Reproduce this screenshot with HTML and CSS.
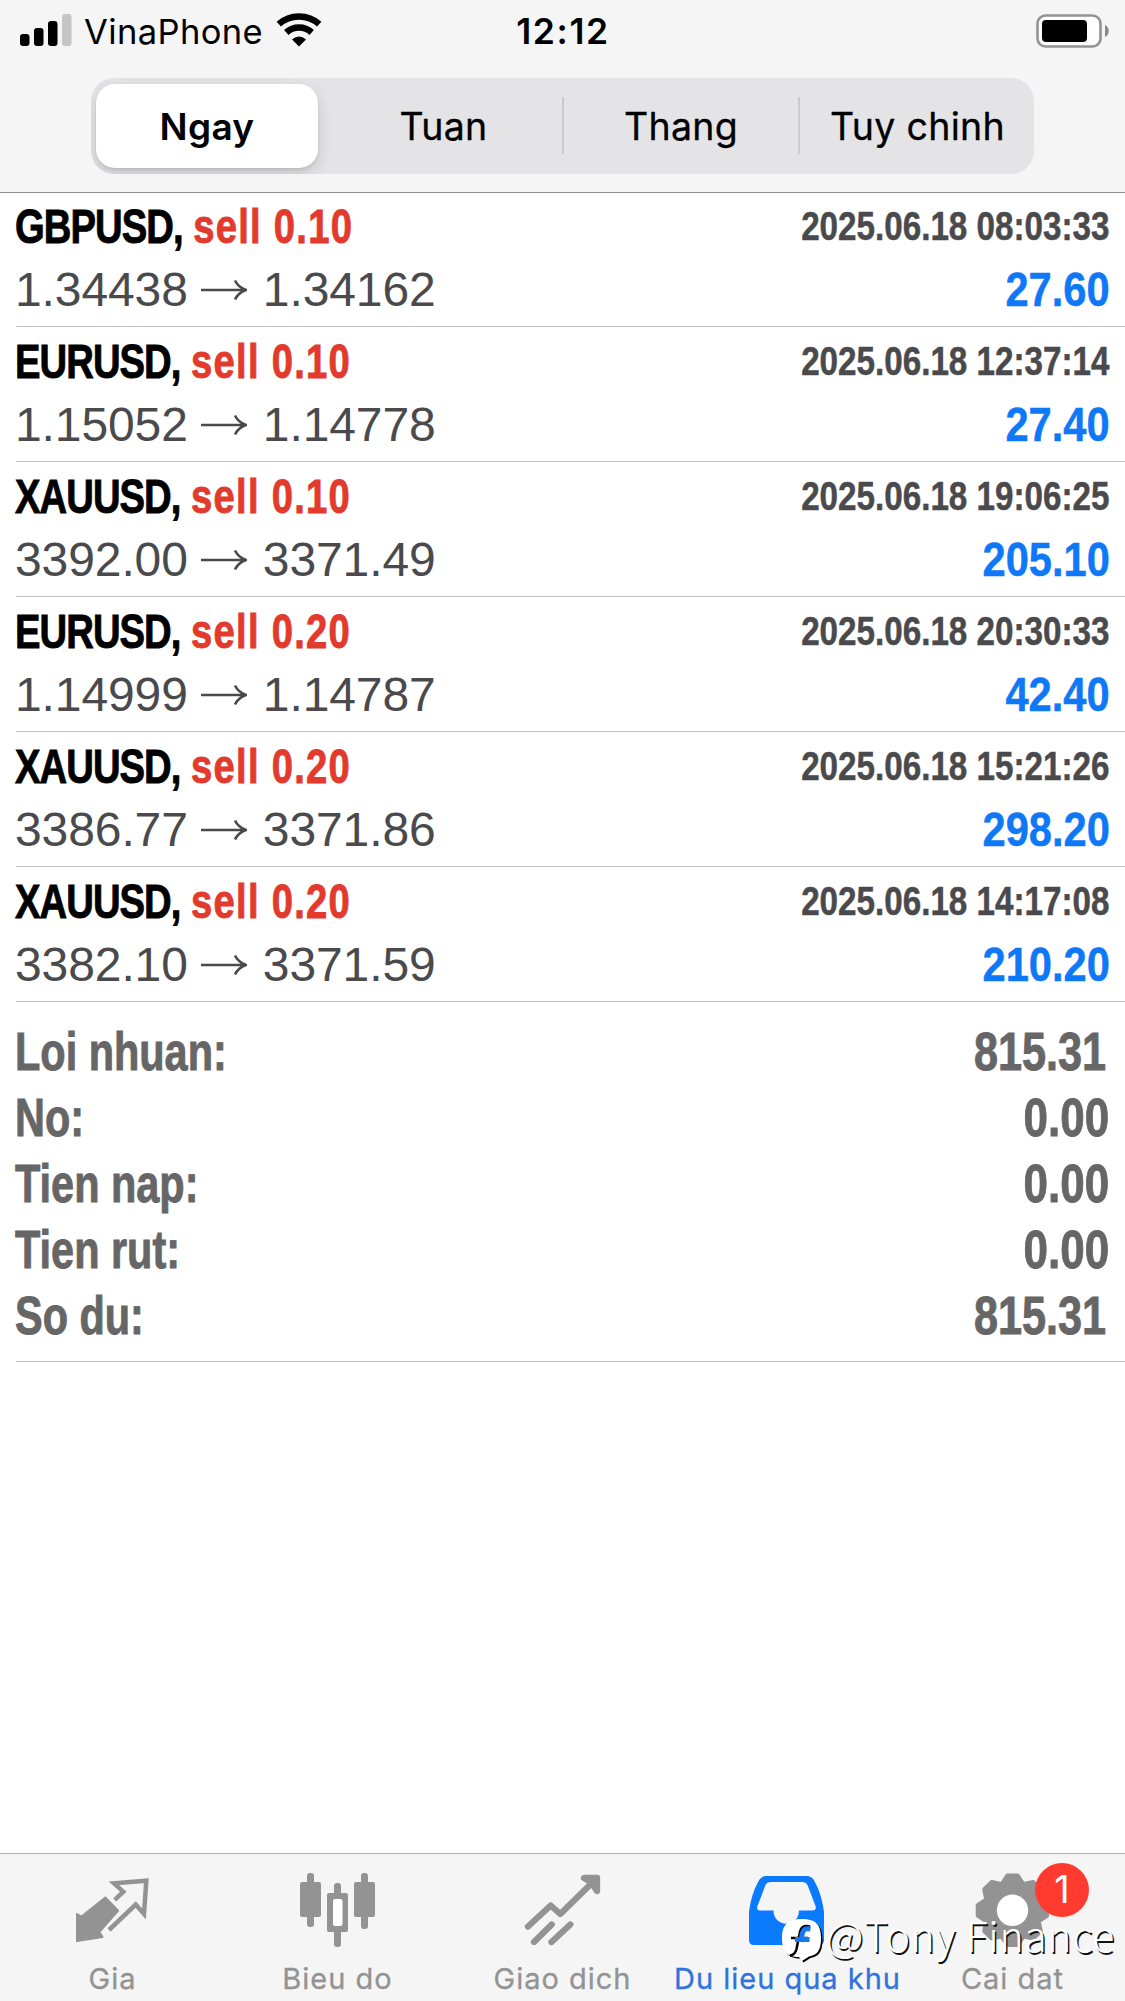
FILE: index.html
```html
<!DOCTYPE html>
<html lang="vi">
<head>
<meta charset="utf-8">
<title>Du lieu qua khu</title>
<link rel="stylesheet" href="styles.css">
</head>
<body>
<div class="screen">
  <header class="header">
    <div class="status">
      <div class="status-left">
        <svg class="signal" width="52" height="34" viewBox="0 0 52 34"><rect x="0" y="20" width="9.5" height="12" rx="3"/><rect x="14" y="14" width="9.5" height="18" rx="3"/><rect x="28" y="7" width="9.5" height="25" rx="3"/><rect x="42" y="0" width="9.5" height="32" rx="3" fill="#c4c4c4"/></svg>
        <span class="carrier">VinaPhone</span>
        <svg class="wifi" width="46" height="34" viewBox="0 0 46 34"><g fill="none" stroke="#000" stroke-width="6.5"><path d="M2.8 11.2C14 .9 32 .9 43.200 11.200"/><path d="M10.300 19.500C17.500 12.800 28.500 12.800 35.700 19.500"/></g><path d="M16 26.500Q23 20.500 30 26.500L23 33.500Z"/></svg>
      </div>
      <span class="time">12:12</span>
      <svg class="battery" width="74" height="34" viewBox="0 0 74 34"><rect x="1.500" y="1.500" width="63" height="31" rx="8" fill="#fdfdfd" stroke="#929292" stroke-width="2.600"/><rect x="6" y="6" width="45" height="22" rx="4"/><path d="M69 11C74 13 74 21 69 23Z" fill="#888"/></svg>
    </div>
    <nav class="segments">
      <span class="segment active">Ngay</span>
      <span class="segment">Tuan</span>
      <span class="segment divided">Thang</span>
      <span class="segment divided last">Tuy chinh</span>
    </nav>
  </header>

  <main class="content">
    <article class="deal">
      <div class="deal-top"><h2 class="title"><span class="symbol">GBPUSD,</span> <span class="side">sell 0.10</span></h2><time class="date">2025.06.18 08:03:33</time></div>
      <div class="deal-bottom"><div class="prices"><span>1.34438</span><svg class="arrow" viewBox="0 0 46 22"><path d="M0 11H44M34 1.500Q37 8 45 11Q37 14 34 20.500"/></svg><span>1.34162</span></div><span class="profit">27.60</span></div>
    </article>
    <article class="deal">
      <div class="deal-top"><h2 class="title"><span class="symbol">EURUSD,</span> <span class="side">sell 0.10</span></h2><time class="date">2025.06.18 12:37:14</time></div>
      <div class="deal-bottom"><div class="prices"><span>1.15052</span><svg class="arrow" viewBox="0 0 46 22"><path d="M0 11H44M34 1.500Q37 8 45 11Q37 14 34 20.500"/></svg><span>1.14778</span></div><span class="profit">27.40</span></div>
    </article>
    <article class="deal">
      <div class="deal-top"><h2 class="title"><span class="symbol">XAUUSD,</span> <span class="side">sell 0.10</span></h2><time class="date">2025.06.18 19:06:25</time></div>
      <div class="deal-bottom"><div class="prices"><span>3392.00</span><svg class="arrow" viewBox="0 0 46 22"><path d="M0 11H44M34 1.500Q37 8 45 11Q37 14 34 20.500"/></svg><span>3371.49</span></div><span class="profit">205.10</span></div>
    </article>
    <article class="deal">
      <div class="deal-top"><h2 class="title"><span class="symbol">EURUSD,</span> <span class="side">sell 0.20</span></h2><time class="date">2025.06.18 20:30:33</time></div>
      <div class="deal-bottom"><div class="prices"><span>1.14999</span><svg class="arrow" viewBox="0 0 46 22"><path d="M0 11H44M34 1.500Q37 8 45 11Q37 14 34 20.500"/></svg><span>1.14787</span></div><span class="profit">42.40</span></div>
    </article>
    <article class="deal">
      <div class="deal-top"><h2 class="title"><span class="symbol">XAUUSD,</span> <span class="side">sell 0.20</span></h2><time class="date">2025.06.18 15:21:26</time></div>
      <div class="deal-bottom"><div class="prices"><span>3386.77</span><svg class="arrow" viewBox="0 0 46 22"><path d="M0 11H44M34 1.500Q37 8 45 11Q37 14 34 20.500"/></svg><span>3371.86</span></div><span class="profit">298.20</span></div>
    </article>
    <article class="deal">
      <div class="deal-top"><h2 class="title"><span class="symbol">XAUUSD,</span> <span class="side">sell 0.20</span></h2><time class="date">2025.06.18 14:17:08</time></div>
      <div class="deal-bottom"><div class="prices"><span>3382.10</span><svg class="arrow" viewBox="0 0 46 22"><path d="M0 11H44M34 1.500Q37 8 45 11Q37 14 34 20.500"/></svg><span>3371.59</span></div><span class="profit">210.20</span></div>
    </article>
    <section class="summary">
      <div class="total"><span class="label">Loi nhuan:</span><span class="value balance">815.31</span></div>
      <div class="total"><span class="label">No:</span><span class="value">0.00</span></div>
      <div class="total"><span class="label">Tien nap:</span><span class="value">0.00</span></div>
      <div class="total"><span class="label">Tien rut:</span><span class="value">0.00</span></div>
      <div class="total"><span class="label">So du:</span><span class="value balance">815.31</span></div>
    </section>
  </main>

  <footer class="tabs">
    <div class="tab">
      <svg class="icon" viewBox="0 0 75 76"><path d="M2 42L6.500 44.500L30.300 25.500L43.200 38.700L24.300 60L27.500 65L2 69Z" fill="currentColor" stroke="currentColor" stroke-width="2" stroke-linejoin="round"/><path d="M39.700 28L48.300 19.700L39 11.300L71.300 8.700L69 42L60.700 32.500L34 58" fill="none" stroke="currentColor" stroke-width="4.500"/></svg>
      <span class="tab-label">Gia</span>
    </div>
    <div class="tab">
      <svg class="icon" viewBox="0 0 75 76" fill="currentColor"><rect x="7" y="1" width="7" height="54" rx="3"/><rect y="10" width="21" height="35" rx="2"/><rect x="34" y="11" width="7" height="64" rx="3"/><rect x="27" y="21" width="21" height="39" rx="2"/><rect x="33" y="27" width="9.500" height="27" rx="2" fill="#fff"/><rect x="61" y="1" width="7" height="56" rx="3"/><rect x="54" y="10" width="21" height="35" rx="2"/></svg>
      <span class="tab-label">Bieu do</span>
    </div>
    <div class="tab">
      <svg class="icon" viewBox="0 0 75 76" fill="none" stroke="currentColor" stroke-width="6.300" stroke-linecap="round" stroke-linejoin="round"><path d="M3 54.500L25.700 33.500L35.300 42L71 7"/><path d="M59 6H72V19L66 10Z" fill="currentColor"/><path d="M9 70L26.700 52.500M26.500 70L45.300 52.500"/></svg>
      <span class="tab-label">Giao dich</span>
    </div>
    <div class="tab selected">
      <svg class="icon" viewBox="0 0 75 76" fill="currentColor"><path fill-rule="evenodd" d="M-1 40C1 25 5 15 9.500 7.500Q12 4 16 4H57Q61 4 63.500 7.500C68 15 72 25 74 40V68Q74 73 69 73H4Q-1 73 -1 68ZM21 10Q17 10 15.500 13L7.500 34Q6 38.500 10 38.500H23.500C23.500 56 49 56 49 38.500H62Q67 38.500 65.500 34L57.500 13Q56 10 52 10Z"/></svg>
      <span class="tab-label">Du lieu qua khu</span>
    </div>
    <div class="tab">
      <svg class="icon" viewBox="0 0 75 76"><g fill="currentColor" stroke="currentColor" stroke-width="5" stroke-linejoin="round"><circle cx="37.500" cy="38.300" r="27"/><g id="teeth"><path d="M26 14L32.500 4H42.500L49 14Z"/><path d="M26 62.600L32.500 72.600H42.500L49 62.600Z"/><path d="M61.800 26.800L71.800 33.300V43.300L61.800 49.800Z"/><path d="M13.200 26.800L3.200 33.300V43.300L13.200 49.800Z"/></g><use href="#teeth" transform="rotate(45 37.500 38.300)"/></g><circle cx="37.500" cy="38.300" r="15.700" fill="#fff"/></svg>
      <span class="badge">1</span>
      <span class="tab-label">Cai dat</span>
    </div>
  </footer>

  <div class="watermark">
    <svg class="mark" width="44" height="48" viewBox="0 0 44 48"><path transform="translate(1.500 1.500)" d="M20 1C34 1 39 7 39 20S35 37 27 38.500L20 43L17 39C4 39 0 32 0 20S5 1 20 1Z" fill="#000"/><path d="M20 1C34 1 39 7 39 20S35 37 27 38.500L20 43L17 39C4 39 0 32 0 20S5 1 20 1Z" fill="#fff"/><g fill="none"><path d="M28 8.500C21 7 18.500 9.500 17.500 16L14.500 31Q13 37 8 37.500M9 20H26" stroke="#000" stroke-width="2.500"/><path d="M28.500 11C23 10 21 11.500 20 17L19 24M13 21.500H27.500" stroke="#1677f5" stroke-width="5"/></g></svg>
    <span class="mark-text">@Tony Finance</span>
  </div>
</div>
</body>
</html>
```
FILE: styles.css
```css
* { box-sizing: border-box; }
body { margin: 0; background: #fff; }
.screen {
  position: relative;
  display: flex;
  flex-direction: column;
  width: 1125px;
  height: 2001px;
  overflow: hidden;
  font-family: "Liberation Sans", Arial, sans-serif;
}

.header {
  height: 193px;
  background: #f5f5f5;
  border-bottom: 1px solid #8e8e8e;
  font-family: Inter, sans-serif;
}
.status {
  display: grid;
  grid-template-columns: 1fr auto 1fr;
  align-items: center;
  height: 60px;
  padding: 0 15px 0 20px;
}
.status-left { display: flex; align-items: center; }
.carrier { margin-left: 12px; width: 181px; font-size: 34.5px; line-height: 60px; letter-spacing: 0.4px; padding-top: 2px; }
.wifi { margin-left: 11px; margin-top: -2px; }
.time { font-size: 35.5px; font-weight: 600; letter-spacing: 1.6px; line-height: 60px; margin-right: 4px; padding-top: 1px; }
.battery { justify-self: end; }

.segments {
  display: grid;
  grid-template-columns: 229px 237px 236px 1fr;
  width: 943px;
  height: 96px;
  margin: 18px 0 0 91px;
  padding: 6px 5px;
  border-radius: 23px;
  background: #e4e4e6;
  overflow: hidden;
}
.segment {
  display: flex;
  align-items: center;
  justify-content: center;
  height: 84px;
  font-size: 37.5px;
  letter-spacing: 0.3px;
  -webkit-text-stroke: 0.3px currentColor;
}
.last { padding-left: 6px; }
.active {
  width: 222px;
  border-radius: 19px;
  background: #fff;
  font-size: 37px;
  font-weight: 600;
  -webkit-text-stroke: 0;
  box-shadow: 0 6px 16px rgba(0, 0, 0, 0.14), 0 2px 3px rgba(0, 0, 0, 0.08);
}
.divided { border-left: 2px solid transparent; border-image: linear-gradient(transparent 14px, #cbcbcd 14px, #cbcbcd 69px, transparent 69px) 1; }

.deal {
  display: flex;
  flex-direction: column;
  justify-content: flex-end;
  height: 135px;
  margin-left: 16px;
  padding: 0 15px 5px 0;
  border-bottom: 1px solid #c2c2c4;
}
.deal:first-child { height: 134px; }
.deal-top, .deal-bottom { display: flex; justify-content: space-between; align-items: flex-start; margin-left: -1px; }
.title {
  margin: 0;
  font-size: 49px;
  font-weight: 700;
  line-height: 62px;
  height: 62px;
  white-space: nowrap;
  -webkit-text-stroke: 0.9px currentColor;
  transform: scaleX(0.78);
  transform-origin: left;
}
.symbol { letter-spacing: -1.2px; }
.side { color: #e23b2e; letter-spacing: 1.6px; }
.date {
  margin-right: 1px;
  font-size: 40px;
  font-weight: 700;
  line-height: 62px;
  color: #4a4a4d;
  -webkit-text-stroke: 0.5px currentColor;
  transform: scaleX(0.83);
  transform-origin: right;
}
.prices { display: flex; align-items: center; font-size: 48px; line-height: 66px; height: 66px; margin-bottom: -2px; color: #4a4a4d; letter-spacing: -0.1px; }
.arrow { width: 46px; height: 22px; margin: -1px 16px 0 13px; fill: none; stroke: currentColor; stroke-width: 2.6; }
.profit {
  font-size: 49px;
  font-weight: 700;
  line-height: 65px;
  height: 64px;
  color: #0f78f6;
  -webkit-text-stroke: 0.5px currentColor;
  transform: scaleX(0.85);
  transform-origin: right;
}

.summary {
  margin-left: 16px;
  padding: 17px 16px 12px 0;
  border-bottom: 1px solid #c2c2c4;
  color: #666;
  font-size: 53px;
  font-weight: 700;
  line-height: 66px;
  -webkit-text-stroke: 0.9px currentColor;
}
.total { display: flex; justify-content: space-between; margin-left: -1px; }
.label { transform: scaleX(0.782); transform-origin: left; }
.value { transform: scaleX(0.83); transform-origin: right; }
.balance { margin-right: 3px; transform: scaleX(0.815); }

.tabs {
  display: grid;
  grid-template-columns: repeat(5, 225px);
  height: 148px;
  margin-top: auto;
  padding-top: 18px;
  border-top: 1px solid #b0b0b0;
  background: #f5f5f5;
  font-family: Inter, sans-serif;
}
.tab { position: relative; display: flex; flex-direction: column; align-items: center; gap: 14px; color: #939393; }
.selected { color: #0a7aff; }
.icon { width: 75px; height: 76px; overflow: visible; }
.tab-label { font-size: 29px; line-height: 34px; letter-spacing: 1px; white-space: nowrap; -webkit-text-stroke: 0.3px currentColor; }
.selected .tab-label { color: #2f74dc; }
.badge {
  position: absolute;
  left: 135px;
  top: -9px;
  width: 54px;
  height: 54px;
  border-radius: 50%;
  background: #ff3b30;
  color: #fff;
  font-size: 38px;
  line-height: 52px;
  text-align: center;
}

.watermark { position: absolute; left: 782px; top: 1918px; display: flex; }
.mark { overflow: visible; }
.mark-text {
  margin-top: -5px;
  font-family: "Noto Sans CJK SC", sans-serif;
  font-size: 41px;
  font-weight: 300;
  line-height: 42px;
  height: 42px;
  letter-spacing: 0.6px;
  color: #fff;
  text-shadow: 1.5px 1.5px 0 #111;
  white-space: nowrap;
}
```
